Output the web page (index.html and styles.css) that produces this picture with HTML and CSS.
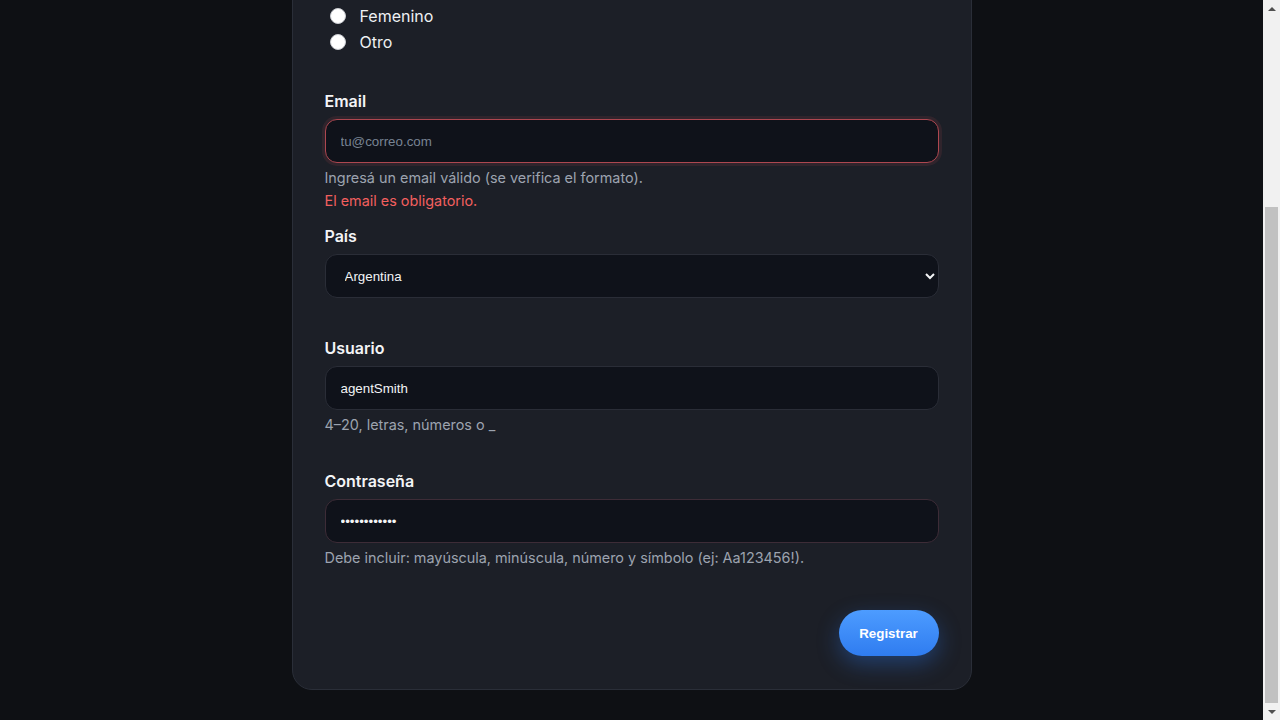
FILE: index.html
```html
<!DOCTYPE html>
<html lang="es">
<head>
<meta charset="utf-8">
<title>Registro</title>
<link rel="stylesheet" href="styles.css">
</head>
<body>
<main class="page">
  <form class="card" novalidate>
    <h1 class="title">Crear cuenta</h1>
    <p class="subtitle">Completá tus datos para registrarte.</p>

    <div class="field">
      <label class="label" for="nombre">Nombre completo</label>
      <input class="input" id="nombre" type="text" value="Thomas Anderson">
      <div class="error"></div>
    </div>

    <div class="field">
      <span class="label">Género</span>
      <div class="radios">
        <label class="radio"><input type="radio" name="genero"><span>Masculino</span></label>
        <label class="radio"><input type="radio" name="genero"><span>Femenino</span></label>
        <label class="radio"><input type="radio" name="genero"><span>Otro</span></label>
      </div>
      <div class="error"></div>
    </div>

    <div class="field">
      <label class="label" for="email">Email</label>
      <input class="input invalid" id="email" type="email" placeholder="tu@correo.com">
      <div class="hint">Ingresá un email válido (se verifica el formato).</div>
      <div class="error">El email es obligatorio.</div>
    </div>

    <div class="field field-select">
      <label class="label" for="pais">País</label>
      <select class="input select" id="pais">
        <option>Argentina</option>
        <option>Chile</option>
        <option>Uruguay</option>
      </select>
      <div class="error"></div>
    </div>

    <div class="field">
      <label class="label" for="usuario">Usuario</label>
      <input class="input" id="usuario" type="text" value="agentSmith">
      <div class="hint">4–20, letras, números o _</div>
      <div class="error"></div>
    </div>

    <div class="field">
      <label class="label" for="pass">Contraseña</label>
      <input class="input warn" id="pass" type="password" value="Matrix2024!x">
      <div class="hint">Debe incluir: mayúscula, minúscula, número y símbolo (ej: Aa123456!).</div>
      <div class="error"></div>
    </div>

    <div class="actions">
      <button class="btn" type="button">Registrar</button>
    </div>
  </form>
</main>

<div class="scrollbar" aria-hidden="true">
  <div class="sb-arrow sb-up"></div>
  <div class="sb-track"><div class="sb-thumb"></div></div>
  <div class="sb-arrow sb-down"></div>
</div>
<script src="script.js"></script>
</body>
</html>
```

FILE: styles.css
```css
html {
  background: #0e1014;
}
body {
  margin: 0 17px 0 0;
  background: #0e1014;
  color: #e5e7eb;
  font-family: Inter, "Noto Sans", sans-serif;
}
.page {
  display: flex;
  justify-content: center;
  padding: 32px 16px 30px;
}
.card {
  width: 680px;
  box-sizing: border-box;
  background: #1c1f27;
  border: 1px solid #2a2e38;
  border-radius: 20px;
  padding: 32px 32px 33px;
}
.title {
  margin: 0 0 6px;
  font-size: 26px;
  line-height: 32px;
  font-weight: 700;
}
.subtitle {
  margin: 0 0 20px;
  font-size: 15px;
  line-height: 20px;
  color: #9ca3af;
}
.field {
  display: flex;
  flex-direction: column;
  margin-bottom: 15px;
}
.label {
  display: block;
  font-size: 16px;
  line-height: 20px;
  font-weight: 600;
  color: #f3f4f6;
  margin-bottom: 8px;
}
.input {
  box-sizing: border-box;
  height: 44px;
  width: 100%;
  background: #0f121a;
  border: 1px solid #2a2d37;
  border-radius: 12px;
  padding: 0 15px;
  color: #f3f4f6;
  font-family: "Liberation Sans", Arial, sans-serif;
  font-size: 13.33px;
  outline: none;
}
.input::placeholder {
  color: #788393;
}
.input.invalid {
  border-color: #ad4750;
  box-shadow: 0 0 0 3px rgba(173, 71, 80, 0.14);
}
.input.warn {
  border-color: #3d2c37;
}
.select {
  color-scheme: dark;
  padding: 0 8px 0 15px;
}
.hint {
  margin-top: 5px;
  font-size: 14.4px;
  line-height: 20px;
  color: #9ca3af;
}
.error {
  margin-top: 3px;
  min-height: 18px;
  font-size: 14.4px;
  line-height: 20px;
  color: #f25f5f;
}
.field-select .error {
  margin-top: 7px;
}
.radios {
  display: flex;
  flex-direction: column;
}
.radio {
  display: flex;
  align-items: center;
  gap: 14px;
  height: 26px;
  font-size: 16px;
  color: #eef0f3;
}
.radio input {
  appearance: none;
  -webkit-appearance: none;
  margin: 0 0 0 5px;
  width: 16px;
  height: 16px;
  border-radius: 50%;
  background: #ffffff;
  border: 1px solid #c9cbd0;
  box-sizing: border-box;
}
.actions {
  display: flex;
  justify-content: flex-end;
  padding-top: 6px;
}
.btn {
  height: 46px;
  width: 100px;
  border: none;
  border-radius: 23px;
  background: linear-gradient(180deg, #4d9cff 0%, #2f7cf0 100%);
  color: #ffffff;
  font-family: "Liberation Sans", Arial, sans-serif;
  font-size: 13.33px;
  font-weight: 700;
  box-shadow: 0 8px 22px rgba(47, 124, 240, 0.35);
}

/* fake browser scrollbar */
.scrollbar {
  position: fixed;
  top: 0;
  right: 0;
  width: 17px;
  height: 100vh;
  background: #f1f1f1;
  display: flex;
  flex-direction: column;
}
.sb-arrow {
  height: 17px;
  flex: none;
  display: flex;
  align-items: center;
  justify-content: center;
}
.sb-up::before,
.sb-down::before {
  content: "";
  width: 0;
  height: 0;
  border-left: 4px solid transparent;
  border-right: 4px solid transparent;
}
.sb-up::before {
  border-bottom: 4px solid #505050;
}
.sb-down::before {
  border-top: 4px solid #505050;
}
.sb-track {
  flex: 1;
  display: flex;
  flex-direction: column;
  justify-content: flex-end;
  padding: 0 2px;
}
.sb-thumb {
  height: 496px;
  background: #c1c1c1;
}
```

FILE: script.js
```js
window.scrollTo(0, document.documentElement.scrollHeight);
```
